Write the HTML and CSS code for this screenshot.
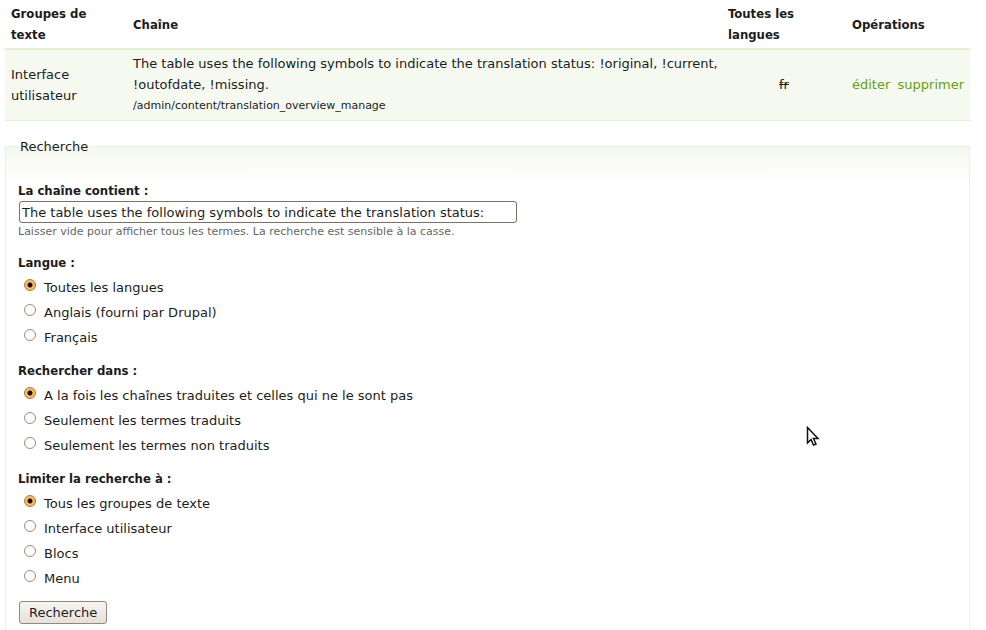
FILE: index.html
```html
<!DOCTYPE html>
<html lang="fr">
<head>
<meta charset="utf-8">
<title>Traduire l'interface</title>
<link rel="stylesheet" href="styles.css">
</head>
<body>
<main class="page">
  <table class="strings">
    <thead>
      <tr>
        <th class="col-group" scope="col">Groupes de texte</th>
        <th scope="col">Chaîne</th>
        <th class="col-lang" scope="col">Toutes les langues</th>
        <th class="col-ops" scope="col">Opérations</th>
      </tr>
    </thead>
    <tbody>
      <tr>
        <td>Interface utilisateur</td>
        <td class="source">The table uses the following symbols to indicate the translation status: !original, !current, !outofdate, !missing.<br><small>/admin/content/translation_overview_manage</small></td>
        <td class="lang"><s>fr</s></td>
        <td><div class="ops"><a href="#">éditer</a><a href="#">supprimer</a></div></td>
      </tr>
    </tbody>
  </table>

  <form class="search">
    <fieldset class="panel">
      <legend>Recherche</legend>
      <div class="item">
        <label class="title" for="string">La chaîne contient :</label>
        <input class="text" id="string" type="text" value="The table uses the following symbols to indicate the translation status:">
        <div class="description">Laisser vide pour afficher tous les termes. La recherche est sensible à la casse.</div>
      </div>
      <div class="item choices" role="radiogroup" aria-labelledby="t-lang">
        <div class="title" id="t-lang">Langue :</div>
        <label class="option"><input type="radio" name="lang" checked>Toutes les langues</label>
        <label class="option"><input type="radio" name="lang">Anglais (fourni par Drupal)</label>
        <label class="option"><input type="radio" name="lang">Français</label>
      </div>
      <div class="item choices" role="radiogroup" aria-labelledby="t-in">
        <div class="title" id="t-in">Rechercher dans :</div>
        <label class="option"><input type="radio" name="in" checked>A la fois les chaînes traduites et celles qui ne le sont pas</label>
        <label class="option"><input type="radio" name="in">Seulement les termes traduits</label>
        <label class="option"><input type="radio" name="in">Seulement les termes non traduits</label>
      </div>
      <div class="item choices" role="radiogroup" aria-labelledby="t-group">
        <div class="title" id="t-group">Limiter la recherche à :</div>
        <label class="option"><input type="radio" name="group" checked>Tous les groupes de texte</label>
        <label class="option"><input type="radio" name="group">Interface utilisateur</label>
        <label class="option"><input type="radio" name="group">Blocs</label>
        <label class="option"><input type="radio" name="group">Menu</label>
      </div>
      <button class="submit" type="button">Recherche</button>
    </fieldset>
  </form>
</main>
<svg class="pointer" width="14" height="21" viewBox="0 0 14 21" aria-hidden="true">
  <path d="M1.5 1.5v15.5l3.500-3.500 2.500 5.500 2.500-1-2.500-5.500h4.500z" fill="#fff" stroke="#111" stroke-width="1.500"/>
</svg>
</body>
</html>
```

FILE: styles.css
```css
* {
  box-sizing: border-box;
}

body {
  margin: 0;
  background: #fff;
  color: #1c1c1c;
  font: 13px/21px "DejaVu Sans", Verdana, sans-serif;
}

.page {
  display: flex;
  flex-direction: column;
  min-height: 100vh;
  padding: 0 16px 0 5px;
}

.strings {
  width: 100%;
  table-layout: fixed;
  border-collapse: separate;
  border-spacing: 0;
}

.strings th,
.strings td {
  padding: 3px 6px;
  text-align: left;
  vertical-align: middle;
}

.strings th {
  border-bottom: 2px solid #e3f1d1;
  font-family: "DejaVu Sans Condensed", "DejaVu Sans", sans-serif;
  font-weight: bold;
}

.strings td {
  padding-bottom: 4px;
  border-bottom: 1px solid #e3f1d1;
  background: #f5f9f0;
}

.strings .source {
  padding-right: 0;
}

.strings .col-group {
  width: 122px;
}

.strings .col-lang,
.strings .col-ops {
  width: 124px;
}

.strings .lang {
  text-align: center;
}

.strings small {
  display: block;
  font-size: 11px;
}

.ops {
  display: flex;
  justify-content: space-between;
}

.ops a {
  color: #669e14;
  text-decoration: none;
}

.search {
  display: flex;
  flex: 1;
  flex-direction: column;
  margin-top: 15px;
}

.panel {
  flex: 1;
  min-width: 0;
  margin: 0;
  padding: 23px 12px 4px;
  border: 1px solid #edf1e2;
  border-bottom: 0;
  background: linear-gradient(#f4f8ee, #fff) 0 0 / 100% 36px no-repeat;
}

.panel legend {
  padding: 0 2px;
}

.item {
  margin-bottom: 11px;
}

.choices {
  margin-bottom: 10px;
}

.title {
  display: block;
  font-family: "DejaVu Sans Condensed", "DejaVu Sans", sans-serif;
  font-weight: bold;
}

.choices .title {
  margin-bottom: 2px;
}

.text {
  display: block;
  width: 498px;
  max-width: 100%;
  height: 22px;
  margin-left: 1px;
  padding: 0 2px;
  border: 1px solid #7d7064;
  border-radius: 3px;
  background: #fff;
  color: inherit;
  font: inherit;
}

.description {
  color: #666;
  font-size: 11px;
  line-height: 18px;
}

.option {
  display: flex;
  align-items: center;
  gap: 8px;
  height: 25px;
  padding-left: 6px;
}

.option input {
  appearance: none;
  width: 12px;
  height: 12px;
  margin: 0 0 6px;
  border: 1px solid #9b8b7e;
  border-radius: 50%;
  background: #fff;
}

.option input:checked {
  border-color: #a87636;
  background: radial-gradient(circle, #111 0 2px, #fdbc62 3px);
}

.submit {
  display: block;
  height: 23px;
  margin: 1px;
  padding: 0 9px;
  border: 1px solid #94887d;
  border-radius: 3px;
  background: linear-gradient(#f7f5f3, #e6e0da);
  color: inherit;
  font: inherit;
}

.pointer {
  position: absolute;
  top: 426px;
  left: 806px;
}
```
